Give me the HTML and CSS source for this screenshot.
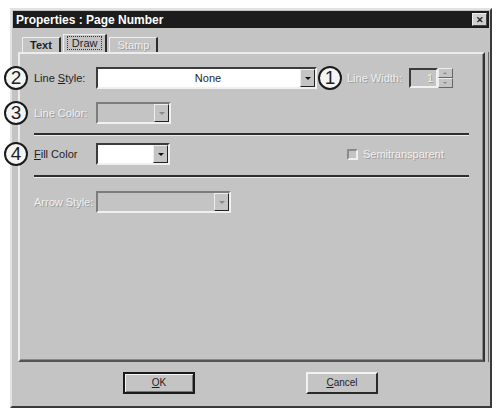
FILE: index.html
```html
<!DOCTYPE html>
<html lang="en">
<head>
  <meta charset="UTF-8">
  <title>Properties : Page Number</title>
  <link rel="stylesheet" href="styles.css">
</head>
<body>
  <div class="dialog">
    <div class="titlebar">
      <span>Properties : Page Number</span>
      <span class="close">&#x2715;</span>
    </div>

    <div class="tabs">
      <span class="tab">Text</span>
      <span class="tab active"><span class="focus">Draw</span></span>
      <span class="tab off">Stamp</span>
    </div>

    <div class="panel">
      <div class="row first">
        <span class="num">2</span>
        <span class="label">Line <u>S</u>tyle:</span>
        <span class="combo wide"><span class="value">None</span><span class="arrow"></span></span>
        <span class="num small-gap">1</span>
        <span class="label off auto">Line Width:</span>
        <span class="spin">
          <span class="spin-val">1</span>
          <span class="spin-btns"><span class="up"></span><span class="down"></span></span>
        </span>
      </div>

      <div class="row second">
        <span class="num">3</span>
        <span class="label off">Line Color:</span>
        <span class="combo disabled color"><span class="value"></span><span class="arrow"></span></span>
      </div>

      <div class="sep first-sep"></div>

      <div class="row third">
        <span class="num">4</span>
        <span class="label"><u>F</u>ill Color</span>
        <span class="combo color fill"><span class="value"></span><span class="arrow"></span></span>
        <span class="check off"><span class="box"></span>Semitransparent</span>
      </div>

      <div class="sep second-sep"></div>

      <div class="row fourth">
        <span class="label off">Arrow Style:</span>
        <span class="combo disabled arrowstyle"><span class="value"></span><span class="arrow"></span></span>
      </div>
    </div>

    <div class="buttons">
      <span class="btn default"><u>O</u>K</span>
      <span class="btn"><u>C</u>ancel</span>
    </div>
  </div>
</body>
</html>
```

FILE: styles.css
```css
html, body {
  margin: 0;
  padding: 0;
}
body {
  background: #fff;
  font-family: 'Liberation Sans', Arial, sans-serif;
  font-size: 11px;
  color: #1e1e1e;
  padding: 8px 0 0 10px;
}
.dialog {
  width: 482px;
  height: 400px;
  box-sizing: border-box;
  background: #c4c4c4;
  border: 2px solid;
  border-color: #e2e2e2 #3a3a3a #3a3a3a #e2e2e2;
  padding: 1px;
}
.titlebar {
  height: 17px;
  background: #1c1c1c;
  color: #fff;
  font-weight: bold;
  font-size: 12px;
  display: flex;
  align-items: center;
  justify-content: space-between;
  padding: 0 2px 0 3px;
}
.close {
  width: 15px;
  height: 13px;
  background: #d0d0d0;
  color: #222;
  font-size: 9px;
  line-height: 13px;
  text-align: center;
  border: 1px solid;
  border-color: #eee #444 #444 #eee;
  box-sizing: border-box;
}

/* tabs */
.tabs {
  display: flex;
  align-items: flex-end;
  height: 17px;
  margin-top: 7px;
  padding-left: 9px;
}
.tab {
  height: 14px;
  padding: 0 7px;
  line-height: 14px;
  border: 1px solid;
  border-bottom: none;
  border-color: #eee #2c2c2c #2c2c2c #eee;
  border-right-width: 2px;
  margin-right: 2px;
  font-weight: bold;
}
.tab.active {
  height: 17px;
  line-height: 17px;
  padding: 0 3px;
  font-weight: normal;
}
.tab.active .focus {
  border: 1px dotted #333;
  padding: 0 4px;
  line-height: 12px;
}
.tab.off {
  color: #eee;
  font-weight: normal;
  text-shadow: 1px 1px 0 #9c9c9c;
}

/* panel */
.panel {
  height: 310px;
  box-sizing: border-box;
  margin: 0 4px 0 5px;
  border: 2px solid;
  border-color: #ececec #333 #555 #ececec;
  box-shadow: inset -1px -1px 0 #8a8a8a, 3px 0 0 #c4c4c4, 4px 0 0 #6a6a6a;
  padding: 12px 0 0 14px;
}
.row {
  display: flex;
  align-items: center;
  height: 24px;
}
.row.second { margin-top: 11px; }
.row.third { margin-top: 6px; }
.row.fourth { margin-top: 12px; }
.num {
  width: 24px;
  height: 24px;
  box-sizing: border-box;
  border: 2px solid #1a1a1a;
  border-radius: 50%;
  background: #f4f4f4;
  font-size: 19px;
  line-height: 20px;
  text-align: center;
  margin-left: -30px;
  margin-right: 6px;
}
.num.small-gap {
  margin-left: 1px;
  margin-right: 5px;
}
.label {
  width: 62px;
  white-space: nowrap;
}
.label.auto {
  width: 56px;
  margin-right: 6px;
}
.off {
  color: #f0f0f0;
  text-shadow: 1px 1px 0 #9c9c9c;
}

/* combo boxes */
.combo {
  display: flex;
  height: 22px;
  box-sizing: border-box;
  border: 2px solid;
  border-color: #3c3c3c #f0f0f0 #f0f0f0 #3c3c3c;
  background: #fff;
}
.combo .value {
  flex: 1;
  line-height: 18px;
  text-align: center;
  padding-left: 18px;
}
.combo .arrow {
  width: 15px;
  box-sizing: border-box;
  background: #c4c4c4;
  border: 1px solid;
  border-color: #eee #222 #222 #eee;
  position: relative;
}
.combo .arrow::after {
  content: "";
  position: absolute;
  left: 4px;
  top: 7px;
  border-left: 3px solid transparent;
  border-right: 3px solid transparent;
  border-top: 3px solid #111;
}
.combo.wide { width: 221px; }
.combo.color { width: 75px; }
.combo.fill { width: 74px; }
.combo.arrowstyle { width: 135px; }
.combo.disabled {
  background: #c4c4c4;
  border-color: #7c7c7c #f0f0f0 #f0f0f0 #7c7c7c;
}
.combo.disabled .arrow::after {
  border-top-color: #8a8a8a;
}

/* spin box */
.spin {
  display: flex;
  height: 20px;
}
.spin-val {
  width: 29px;
  box-sizing: border-box;
  border: 2px solid;
  border-color: #3c3c3c #f0f0f0 #f0f0f0 #3c3c3c;
  text-align: right;
  padding-right: 3px;
  line-height: 16px;
  color: #f0f0f0;
  text-shadow: 1px 1px 0 #9c9c9c;
}
.spin-btns {
  display: flex;
  flex-direction: column;
  width: 15px;
}
.spin-btns span {
  flex: 1;
  border: 1px solid;
  border-color: #eee #666 #666 #eee;
  position: relative;
}
.spin-btns span::after {
  content: "";
  position: absolute;
  left: 4px;
  top: 3px;
  border-left: 2px solid transparent;
  border-right: 2px solid transparent;
}
.spin-btns .up::after { border-bottom: 2px solid #8a8a8a; }
.spin-btns .down::after { border-top: 2px solid #8a8a8a; }

/* checkbox */
.check {
  display: flex;
  align-items: center;
  margin-left: 177px;
  gap: 5px;
}
.check .box {
  width: 11px;
  height: 11px;
  box-sizing: border-box;
  border: 2px solid;
  border-color: #8a8a8a #f0f0f0 #f0f0f0 #8a8a8a;
  background: #c4c4c4;
}

/* separators */
.sep {
  width: 435px;
  height: 2px;
  background: #2e2e2e;
  border-bottom: 1px solid #ececec;
}
.first-sep { margin-top: 8px; }
.second-sep { margin-top: 9px; }

/* footer */
.buttons {
  display: flex;
  margin-top: 10px;
  padding-left: 110px;
  gap: 111px;
}
.btn {
  width: 72px;
  height: 22px;
  box-sizing: border-box;
  border: 2px solid;
  border-color: #f2f2f2 #2a2a2a #2a2a2a #f2f2f2;
  text-align: center;
  line-height: 18px;
  font-size: 10px;
}
.btn.default {
  border-color: #1a1a1a;
  box-shadow: inset 1px 1px 0 #f2f2f2, inset -1px -1px 0 #777;
}
```
